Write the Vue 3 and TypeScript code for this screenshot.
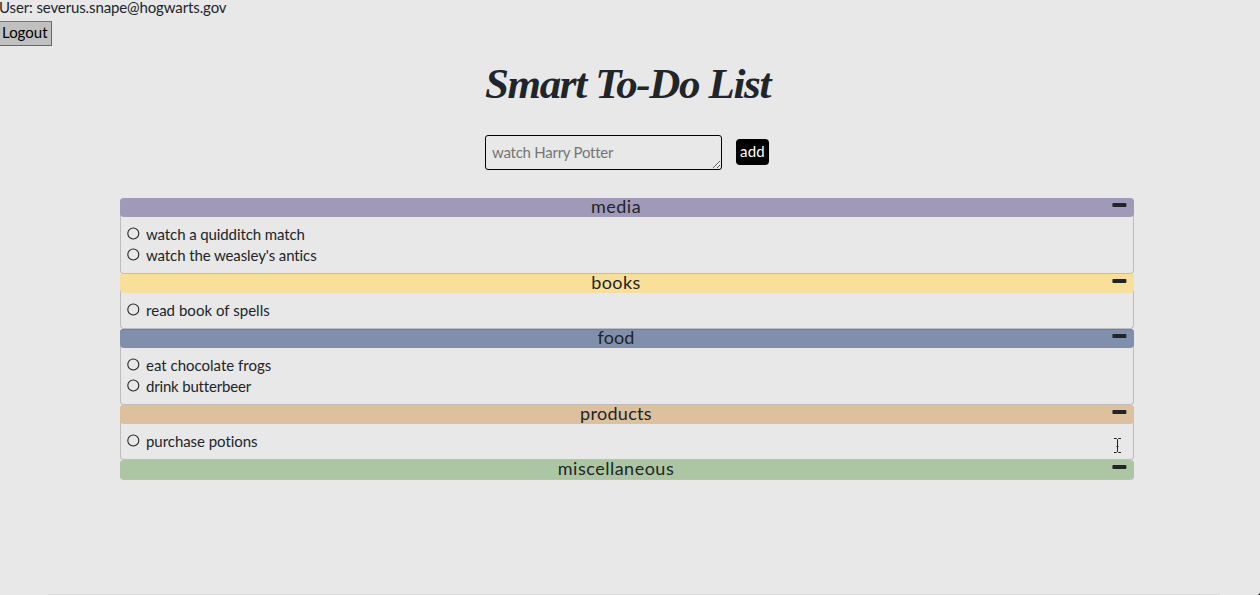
<script setup lang="ts">
interface Category {
  name: string
  spacing: string
  items: { text: string; spacing: string }[]
}

const email = 'severus.snape@hogwarts.gov'

const categories: Category[] = [
  {
    name: 'media',
    spacing: '0.5px',
    items: [
      { text: 'watch a quidditch match', spacing: '-0.1px' },
      { text: "watch the weasley's antics", spacing: '-0.1px' },
    ],
  },
  { name: 'books', spacing: '0.4px', items: [{ text: 'read book of spells', spacing: '0.03px' }] },
  {
    name: 'food',
    spacing: '0.1px',
    items: [
      { text: 'eat chocolate frogs', spacing: '0px' },
      { text: 'drink butterbeer', spacing: '-0.18px' },
    ],
  },
  { name: 'products', spacing: '0.3px', items: [{ text: 'purchase potions', spacing: '-0.05px' }] },
  { name: 'miscellaneous', spacing: '0.5px', items: [] },
]
</script>

<template>
  <div class="page">
    <header class="account">
      <div class="user"><span>User: {{ email }}</span></div>
      <button class="logout" type="button"><span>Logout</span></button>
    </header>

    <h1 class="title"><span>Smart To-Do List</span></h1>

    <form class="composer" @submit.prevent>
      <textarea class="entry" placeholder="watch Harry Potter" rows="1"></textarea>
      <button class="add" type="submit"><span>add</span></button>
    </form>

    <main class="board">
      <section v-for="category in categories" :key="category.name" class="card" :class="category.name">
        <h2 class="bar">
          <span class="name" :style="{ letterSpacing: category.spacing }">{{ category.name }}</span>
          <svg class="minus" width="15" height="4" viewBox="0 0 15 4">
            <rect x="0.4" y="0.1" width="14" height="3.8" rx="0.9" />
          </svg>
        </h2>
        <ul v-if="category.items.length" class="items">
          <li v-for="item in category.items" :key="item.text">
            <svg class="ring" width="13" height="13" viewBox="0 0 13 13">
              <circle cx="6.3" cy="6.5" r="5.5" />
            </svg>
            <span class="label" :style="{ letterSpacing: item.spacing }">{{ item.text }}</span>
          </li>
        </ul>
      </section>
    </main>

    <svg class="cursor" width="9" height="17" viewBox="0 0 9 17">
      <path d="M1 1.5H3.5L4.5 2.5L5.5 1.5H8M4.5 2.5V14.5M3.5 9.5H5.5M1 15.5H3.5L4.5 14.5L5.5 15.5H8" />
    </svg>
    <div class="edge"></div>
    <div class="corner"></div>
  </div>
</template>

<style>
body {
  background: #e8e8e8;
}
</style>

<style scoped>
.page {
  position: relative;
  box-sizing: border-box;
  height: 595px;
  overflow: hidden;
  background: #e8e8e8;
  color: #212529;
  font-family: Lato, 'Liberation Sans', sans-serif;
  font-size: 15px;
  font-variant-ligatures: none;
}
.account {
  height: 46px;
}
.user {
  height: 21px;
  line-height: 15px;
  margin-left: -1px;
  letter-spacing: -0.12px;
  white-space: nowrap;
}
.logout {
  display: block;
  box-sizing: border-box;
  width: 53px;
  height: 25px;
  margin-left: -1px;
  padding: 0 0 0 2px;
  border: 1px solid #767676;
  border-right-color: #666;
  border-bottom-color: #666;
  background: #c0c0c0;
  color: #000;
  font: inherit;
  line-height: 20px;
  text-align: left;
}
.logout span {
  display: block;
  height: 23px;
}
.title {
  height: 89px;
  margin: 0;
  padding-left: 485px;
  font-family: 'Liberation Serif', serif;
  font-size: 43px;
  font-style: italic;
  font-weight: 700;
  letter-spacing: -1.35px;
  line-height: 76px;
  white-space: nowrap;
}
.composer {
  display: flex;
  height: 63px;
  padding-left: 485px;
}
.entry {
  box-sizing: border-box;
  width: 237px;
  height: 35px;
  margin: 0 14px 0 0;
  padding: 6px;
  border: 1px solid #000;
  border-radius: 3px;
  background: transparent;
  font: inherit;
  letter-spacing: -0.25px;
  line-height: 20px;
  overflow: hidden;
}
.entry::placeholder {
  color: #757575;
}
.add {
  width: 33px;
  height: 26px;
  margin-top: 4px;
  padding: 0 0 3px;
  border: 0;
  border-radius: 4px;
  background: #000;
  color: #fff;
  font: inherit;
  letter-spacing: 0.2px;
  line-height: 20px;
}
.board {
  width: 1014px;
  margin-left: 120px;
}
.card {
  box-sizing: border-box;
  border: 1px solid #bdbdbd;
  border-top: 0;
  border-radius: 4px;
}
.bar {
  position: relative;
  height: 19px;
  margin: 0 -1px;
  border-radius: 4px;
  font-size: 18px;
  font-weight: 400;
  line-height: 16px;
  padding-right: 22px;
  box-sizing: border-box;
  text-align: center;
}
.minus {
  position: absolute;
  top: 5px;
  right: 7px;
  fill: #212529;
}
.media .bar { background: #a09ab8; }
.books .bar { background: #f9e09a; }
.food .bar { background: #808fab; box-shadow: inset 0 1px #71809b; }
.products .bar { background: #ddc09d; }
.miscellaneous .bar { background: #acc6a4; }
.items {
  margin: 0;
  padding: 6px 6px 8px;
  list-style: none;
}
.items li {
  display: flex;
  align-items: center;
  gap: 6px;
  height: 21px;
  line-height: 20px;
}
.ring {
  fill: none;
  stroke: #212529;
  stroke-width: 1.1;
}
.label {
  white-space: nowrap;
}
.cursor {
  position: absolute;
  left: 1113px;
  top: 437px;
  fill: none;
  stroke: #222;
  stroke-width: 1;
}
.edge {
  position: absolute;
  left: 48px;
  right: 40px;
  bottom: 0;
  height: 1px;
  background: #dadada;
}
.corner {
  position: absolute;
  right: 0;
  bottom: 0;
  border-left: 2px solid transparent;
  border-bottom: 2px solid #111;
}
</style>
